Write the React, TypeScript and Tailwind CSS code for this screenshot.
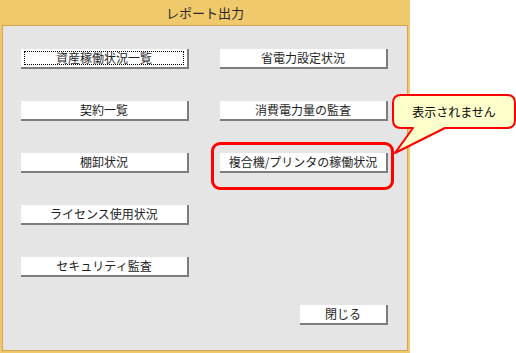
import React from "react";

const font = { fontFamily: '"Noto Sans CJK JP", "Noto Sans", sans-serif' };

function WinButton({
  label,
  focused = false,
  className = "",
}: {
  label: string;
  focused?: boolean;
  className?: string;
}) {
  return (
    <button
      type="button"
      className={`relative flex h-[20px] items-center justify-center border-b-2 border-r-2 border-b-[#7d7d7d] border-r-[#7d7d7d] bg-white text-[12px] leading-none text-[#1e1e1e] ${className}`}
    >
      {focused ? (
        <span className="pointer-events-none absolute inset-x-[3px] inset-y-[2px] border border-dotted border-black" />
      ) : null}
      <span className="relative">{label}</span>
    </button>
  );
}

export default function App() {
  return (
    <div className="relative h-[353px] w-[516px] overflow-hidden bg-white" style={font}>
      {/* ウィンドウ本体 */}
      <div className="flex h-[353px] w-[410px] flex-col bg-[#f0c96c] px-[2px] pb-[2px]">
        <div className="flex h-[25px] shrink-0 items-center justify-center text-[13px] text-[#2a2a2a]">
          レポート出力
        </div>
        <div className="flex flex-1 flex-col border border-[#d2a650] bg-[#e5e5e5] px-[18px] pt-[23px]">
          <div className="grid grid-cols-[168px_168px] gap-x-[31px] gap-y-[32px]">
            <WinButton label="資産稼働状況一覧" focused />
            <WinButton label="省電力設定状況" />
            <WinButton label="契約一覧" />
            <WinButton label="消費電力量の監査" />
            <WinButton label="棚卸状況" />
            <WinButton label="複合機/プリンタの稼働状況" />
            <WinButton label="ライセンス使用状況" />
            <div />
            <WinButton label="セキュリティ監査" />
          </div>
          <div className="mt-[28px] flex justify-end pr-[1px]">
            <WinButton label="閉じる" className="w-[88px]" />
          </div>
        </div>
      </div>

      {/* 強調枠 */}
      <div className="pointer-events-none absolute left-[211px] top-[142px] h-[48px] w-[183px] rounded-[9px] border-[3px] border-[#ff0000]" />

      {/* 吹き出し */}
      <svg className="absolute left-0 top-0" width="516" height="353" viewBox="0 0 516 353">
        <path
          d="M401 95 H507 Q515 95 515 103 V120 Q515 128 507 128 H445 L395 153 L413 128 H401 Q393 128 393 120 V103 Q393 95 401 95 Z"
          fill="#ffffcc"
          stroke="#ff0000"
          strokeWidth="2"
          strokeLinejoin="round"
        />
      </svg>
      <div className="absolute left-[393px] top-[95px] flex h-[33px] w-[122px] items-center justify-center text-[12px] text-black">
        表示されません
      </div>
    </div>
  );
}
